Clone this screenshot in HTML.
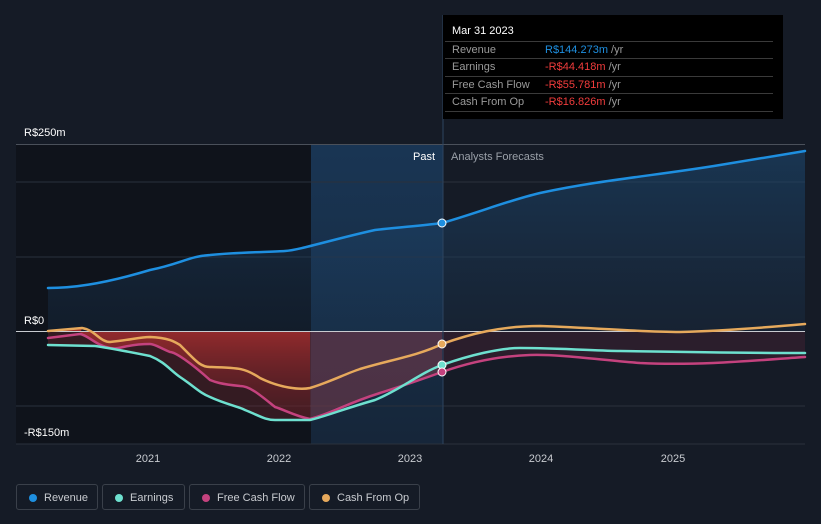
<!DOCTYPE html><html><head><style>
body{margin:0;width:821px;height:524px;background:#151b26;font-family:"Liberation Sans",sans-serif;overflow:hidden;position:relative}
.tt{position:absolute;left:443px;top:15px;width:340px;height:104px;background:#000;color:#fff;font-size:11px}
.tt .h{position:absolute;left:9px;top:10px;font-size:11px}
.row{position:absolute;left:2px;width:328px;border-top:1px solid #3a3a3a;height:17px;line-height:17px;color:#9a9a9a}
.row span.l{position:absolute;left:7px}.row span.v{position:absolute;left:100px}
.leg{position:absolute;top:484px;height:26px;border:1px solid #3a404a;border-radius:3px;color:#c8cbd0;font-size:11px;line-height:26px;box-sizing:border-box}
.leg i{position:absolute;left:12px;top:9px;width:8px;height:8px;border-radius:50%}
.leg span{position:absolute;left:27px}
</style></head><body>
<svg width="821" height="524" style="position:absolute;left:0;top:0">
<defs><linearGradient id="rg" x1="0" y1="0" x2="0" y2="1"><stop offset="0" stop-color="#1c4a74" stop-opacity=".7"/><stop offset="1" stop-color="#1c3a5a" stop-opacity=".3"/></linearGradient>
<linearGradient id="ng" x1="0" y1="0" x2="0" y2="1"><stop offset="0" stop-color="#c0302e" stop-opacity=".85"/><stop offset="1" stop-color="#5a1820" stop-opacity=".3"/></linearGradient>
<linearGradient id="hg" x1="0" y1="0" x2="0" y2="1"><stop offset="0" stop-color="#1a3a5c"/><stop offset="1" stop-color="#16283d"/></linearGradient></defs>
<rect x="16" y="144" width="295" height="300" fill="#0f131b"/>
<rect x="311" y="144" width="132" height="300" fill="url(#hg)" opacity=".85"/>
<g stroke="#2a313c" stroke-width="1"><line x1="16" y1="182" x2="805" y2="182"/><line x1="16" y1="257" x2="805" y2="257"/><line x1="16" y1="406" x2="805" y2="406"/><line x1="16" y1="444" x2="805" y2="444"/></g>
<line x1="16" y1="144.5" x2="805" y2="144.5" stroke="#4a505a"/>
<path d="M48,288 C70,288 100,285 150,270 C180,264 190,256 210,255 C240,252 270,252 285,251 C300,250 330,240 375,230 C400,227 420,226 442,223 C480,212 510,200 540,193 C600,180 660,175 720,165 L805,151 L805,331 L48,331Z" fill="url(#rg)" opacity=".8"/>
<path d="M48,331 L82,328 L80,334 C88,335 95,345 110,348 C120,350 125,344 150,344 C155,344 160,348 170,352 C175,352 190,362 210,380 C215,382 220,384 240,386 C250,386 260,395 275,407 C285,410 295,416 310,419 L310,331Z" fill="url(#ng)"/>
<path d="M48,331 L48,345 L95,346 C110,348 130,352 150,356 C165,362 170,370 180,377 C195,387 200,393 210,397 C225,404 240,407 245,410 C260,416 265,420 275,420 L310,420 L310,331Z" fill="#7a2a30" opacity=".35"/>
<path d="M310,331 L442,331 L442,372 C420,380 405,385 380,393 C360,398 345,404 310,419Z" fill="#7a3b4a" opacity=".55"/>
<path d="M442,331 L805,331 L805,357 C760,360 700,366 640,363 C600,360 560,354 530,355 C500,356 470,362 442,372Z" fill="#3a2230" opacity=".6"/>
<line x1="16" y1="331.5" x2="805" y2="331.5" stroke="#c8cbd0"/>
<line x1="443" y1="15" x2="443" y2="444" stroke="#2d4460"/>
<g fill="none" stroke-width="2.5" stroke-linecap="round">
<path stroke="#1e8fe0" d="M48,288 C70,288 100,285 150,270 C180,264 190,256 210,255 C240,252 270,252 285,251 C300,250 330,240 375,230 C400,227 420,226 442,223 C480,212 510,200 540,193 C600,180 660,175 720,165 L805,151"/>
<path stroke="#e6a95c" d="M48,331 L82,328 C95,330 100,342 110,342 C130,340 140,337 150,337 C170,338 175,342 180,345 C195,360 200,367 210,367 C240,368 245,368 260,378 C280,388 300,390 310,388 C330,382 345,374 360,369 C390,360 420,355 442,344 C470,334 500,326 540,326 C600,328 640,332 680,332 C720,331 760,328 805,324"/>
<path stroke="#c4427e" d="M48,338 L80,334 C88,335 95,345 110,348 C120,350 125,344 150,344 C155,344 160,348 170,352 C175,352 190,362 210,380 C215,382 220,384 240,386 C250,386 260,395 275,407 C285,410 295,416 310,419 C330,414 345,404 380,393 C405,385 420,380 442,372 C470,362 500,356 530,355 C560,354 600,360 640,363 C700,366 760,360 805,357"/>
<path stroke="#6ee0cf" d="M48,345 L95,346 C110,348 130,352 150,356 C165,362 170,370 180,377 C195,387 200,393 210,397 C225,404 240,407 245,410 C260,416 265,420 275,420 L310,420 C330,415 340,410 375,400 C400,390 420,373 442,365 C470,355 500,348 520,348 C560,348 600,351 620,351 C680,352 740,353 805,353"/>
</g>
<g stroke="#fff" stroke-width="1"><circle cx="442" cy="223" r="4" fill="#1e8fe0"/><circle cx="442" cy="344" r="4" fill="#e6a95c"/><circle cx="442" cy="365" r="4" fill="#6ee0cf"/><circle cx="442" cy="372" r="4" fill="#c4427e"/></g>
<g font-size="11" fill="#fff"><text x="24" y="136">R$250m</text><text x="24" y="324">R$0</text><text x="24" y="436">-R$150m</text></g>
<g font-size="11"><text x="435" y="160" fill="#fff" text-anchor="end">Past</text><text x="451" y="160" fill="#9aa0a8">Analysts Forecasts</text></g>
<g font-size="11" fill="#c8cbd0" text-anchor="middle"><text x="148" y="462">2021</text><text x="279" y="462">2022</text><text x="410" y="462">2023</text><text x="541" y="462">2024</text><text x="673" y="462">2025</text></g>
</svg>
<div class="tt"><div class="h">Mar 31 2023</div>
<div class="row" style="top:26px"><span class="l">Revenue</span><span class="v"><b style="font-weight:normal;color:#1e8fe0">R$144.273m</b> /yr</span></div>
<div class="row" style="top:43px"><span class="l">Earnings</span><span class="v"><b style="font-weight:normal;color:#f03c3c">-R$44.418m</b> /yr</span></div>
<div class="row" style="top:61px"><span class="l">Free Cash Flow</span><span class="v"><b style="font-weight:normal;color:#f03c3c">-R$55.781m</b> /yr</span></div>
<div class="row" style="top:78px;border-bottom:1px solid #3a3a3a"><span class="l">Cash From Op</span><span class="v"><b style="font-weight:normal;color:#f03c3c">-R$16.826m</b> /yr</span></div>
</div>
<div class="leg" style="left:16px;width:82px"><i style="background:#1e8fe0"></i><span>Revenue</span></div>
<div class="leg" style="left:102px;width:83px"><i style="background:#6ee0cf"></i><span>Earnings</span></div>
<div class="leg" style="left:189px;width:116px"><i style="background:#c4427e"></i><span>Free Cash Flow</span></div>
<div class="leg" style="left:309px;width:111px"><i style="background:#e6a95c"></i><span>Cash From Op</span></div>
</body></html>
